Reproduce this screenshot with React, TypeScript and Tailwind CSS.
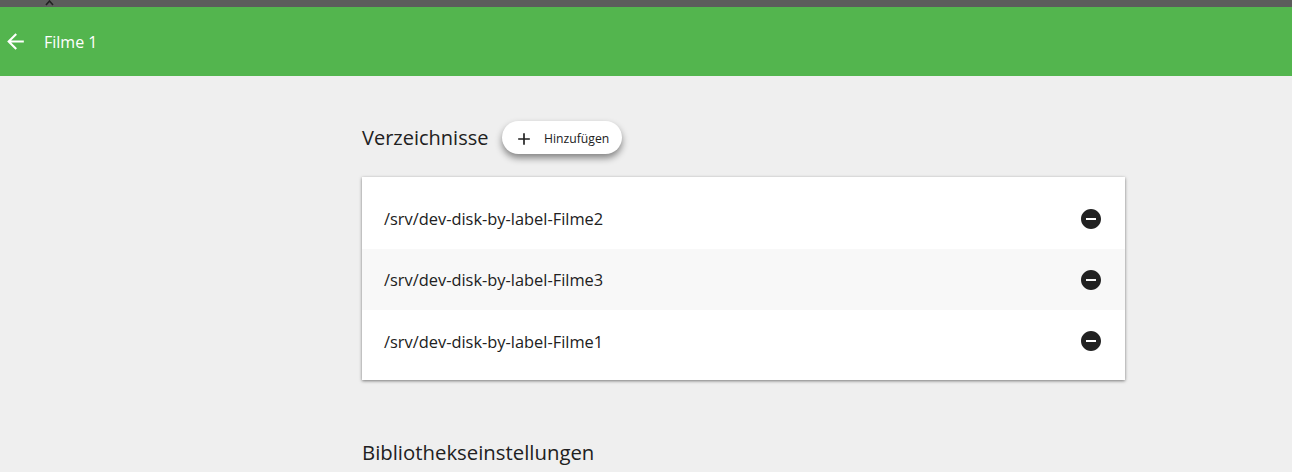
const paths = [
  "/srv/dev-disk-by-label-Filme2",
  "/srv/dev-disk-by-label-Filme3",
  "/srv/dev-disk-by-label-Filme1",
];

function MinusIcon() {
  return (
    <svg width="24" height="24" viewBox="0 0 24 24" fill="#212121">
      <path d="M12 2C6.48 2 2 6.48 2 12s4.48 10 10 10 10-4.48 10-10S17.52 2 12 2zm5 11H7v-2h10v2z" />
    </svg>
  );
}

export default function App() {
  return (
    <div className="h-[472px] overflow-hidden bg-[#efefef] font-['Open_Sans',sans-serif] text-[#212121]">
      <div className="relative h-[7px] bg-[#5c5c5c]">
        <svg className="absolute left-[45px] top-0" width="9" height="6" viewBox="0 0 9 6" fill="none">
          <path d="M1 5l3.5-4L8 5" stroke="#222" strokeWidth="1.6" />
        </svg>
      </div>
      <header className="flex h-[69px] items-center bg-[#53b54e] text-white">
        <svg className="ml-[3px]" width="25" height="25" viewBox="0 0 24 24" fill="white">
          <path d="M20 11H7.83l5.59-5.59L12 4l-8 8 8 8 1.41-1.41L7.83 13H20v-2z" />
        </svg>
        <span className="ml-[16px] text-base">Filme 1</span>
      </header>
      <main className="ml-[362px] w-[763px]">
        <div className="mt-[45px] flex h-[33px] items-center">
          <h2 className="mt-[1px] w-[126px] whitespace-nowrap text-[20px]">Verzeichnisse</h2>
          <button className="ml-[14px] flex h-[33px] w-[120px] items-center rounded-full bg-white pl-[12px] pt-[2px] text-[12.2px] shadow-[0_4px_7px_rgba(0,0,0,0.45)]">
            <svg width="20" height="20" viewBox="0 0 24 24" fill="#212121">
              <path d="M19 13h-6v6h-2v-6H5v-2h6V5h2v6h6v2z" />
            </svg>
            <span className="ml-[10px] pt-[2px]">Hinzufügen</span>
          </button>
        </div>
        <div className="mt-[23px] bg-white pt-[11px] pb-[9px] shadow-[0_1px_3px_rgba(0,0,0,0.5)]">
          {paths.map((p, i) => (
            <div
              key={p}
              className={`flex h-[61px] items-center justify-between px-[22px] text-[16.4px] ${i === 1 ? "bg-[#f8f8f8]" : ""}`}
            >
              <span className={i === 2 ? "pt-[3px]" : "pt-[2px]"}>{p}</span>
              <MinusIcon />
            </div>
          ))}
        </div>
        <h2 className="mt-[57px] text-[20.35px]">Bibliothekseinstellungen</h2>
      </main>
    </div>
  );
}
